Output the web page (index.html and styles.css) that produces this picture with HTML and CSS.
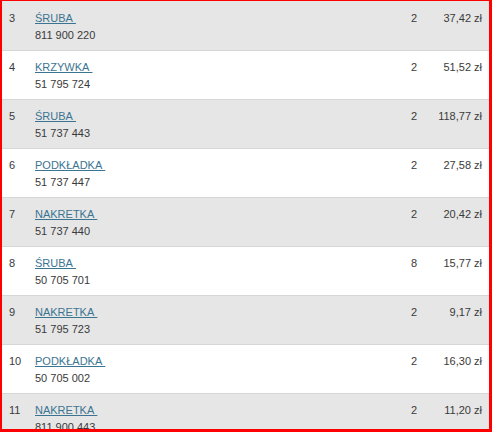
FILE: index.html
```html
<!DOCTYPE html>
<html lang="pl">
<head>
<meta charset="utf-8">
<title>Pozycje</title>
<link rel="stylesheet" href="styles.css">
</head>
<body>
<div class="list">
  <div class="row alt"><span class="idx">3</span><div class="name"><a href="#">ŚRUBA&nbsp;</a><div class="code">811 900 220</div></div><span class="qty">2</span><span class="price">37,42 zł</span></div>
  <div class="row"><span class="idx">4</span><div class="name"><a href="#">KRZYWKA&nbsp;</a><div class="code">51 795 724</div></div><span class="qty">2</span><span class="price">51,52 zł</span></div>
  <div class="row alt"><span class="idx">5</span><div class="name"><a href="#">ŚRUBA&nbsp;</a><div class="code">51 737 443</div></div><span class="qty">2</span><span class="price">118,77 zł</span></div>
  <div class="row"><span class="idx">6</span><div class="name"><a href="#">PODKŁADKA&nbsp;</a><div class="code">51 737 447</div></div><span class="qty">2</span><span class="price">27,58 zł</span></div>
  <div class="row alt"><span class="idx">7</span><div class="name"><a href="#">NAKRETKA&nbsp;</a><div class="code">51 737 440</div></div><span class="qty">2</span><span class="price">20,42 zł</span></div>
  <div class="row"><span class="idx">8</span><div class="name"><a href="#">ŚRUBA&nbsp;</a><div class="code">50 705 701</div></div><span class="qty">8</span><span class="price">15,77 zł</span></div>
  <div class="row alt"><span class="idx">9</span><div class="name"><a href="#">NAKRETKA&nbsp;</a><div class="code">51 795 723</div></div><span class="qty">2</span><span class="price">9,17 zł</span></div>
  <div class="row"><span class="idx">10</span><div class="name"><a href="#">PODKŁADKA&nbsp;</a><div class="code">50 705 002</div></div><span class="qty">2</span><span class="price">16,30 zł</span></div>
  <div class="row alt"><span class="idx">11</span><div class="name"><a href="#">NAKRETKA&nbsp;</a><div class="code">811 900 443</div></div><span class="qty">2</span><span class="price">11,20 zł</span></div>
</div>
<div class="frame"></div>
</body>
</html>
```

FILE: styles.css
```css
html, body {
  margin: 0;
  padding: 0;
  height: 432px;
  overflow: hidden;
  background: #fff;
}
body {
  font-family: Arial, "Liberation Sans", sans-serif;
  font-size: 11px;
  line-height: 17px;
  color: #3a3a3a;
}
.list {
  padding-top: 2px;
  background: #e6e6e6;
}
.row {
  display: grid;
  grid-template-columns: 26px 1fr 60px 65px;
  align-items: start;
  box-sizing: border-box;
  height: 49px;
  padding: 8px 10px 0 9px;
  border-bottom: 1px solid #d6d6d6;
  background: #fff;
}
.row.alt {
  background: #e6e6e6;
}
.name a {
  color: #3b7491;
  text-decoration: underline;
}
.qty, .price {
  text-align: right;
}
.frame {
  position: fixed;
  inset: 0;
  border-style: solid;
  border-color: #ff0000;
  border-width: 1px 3px 3px 2px;
  pointer-events: none;
}
```
